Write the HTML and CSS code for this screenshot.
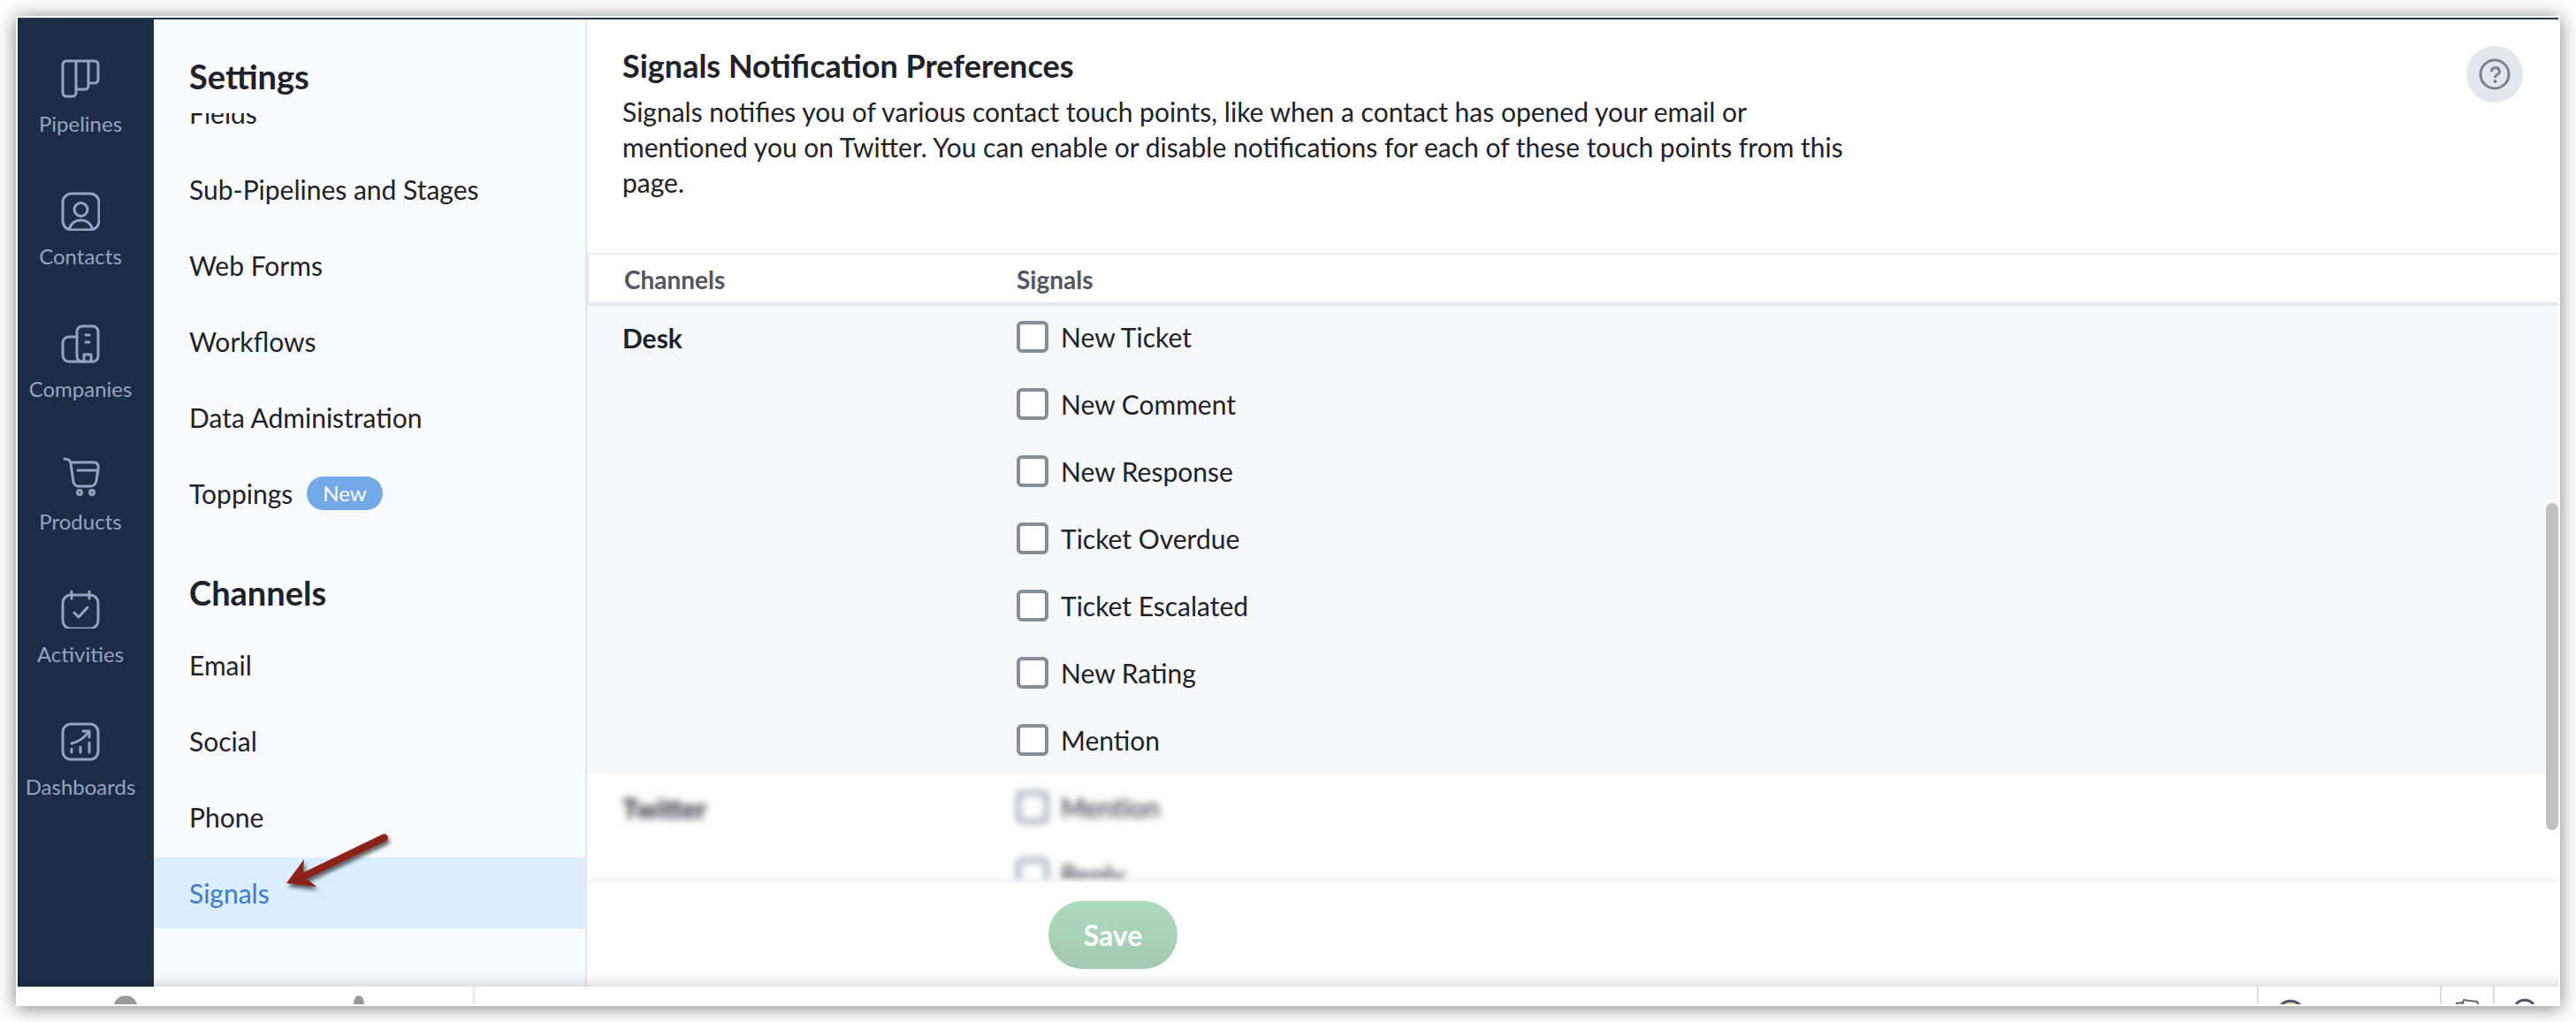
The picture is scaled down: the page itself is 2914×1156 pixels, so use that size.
FILE: index.html
```html
<!DOCTYPE html>
<html lang="en">
<head>
<meta charset="utf-8">
<title>Signals Notification Preferences</title>
<link rel="stylesheet" href="styles.css">
</head>
<body>
<div class="window">
  <div class="app">
    <nav class="rail" aria-label="Modules">
      <a class="rail-item" href="#">
        <svg class="rail-icon" viewBox="0 0 44 44"><path d="M6 2h11v36a4 4 0 0 1-4 4H6a4 4 0 0 1-4-4V6a4 4 0 0 1 4-4zM17 2h14v28a4 4 0 0 1-4 4H17M31 2h7a4 4 0 0 1 4 4v17a4 4 0 0 1-4 4h-7"/></svg>
        <span>Pipelines</span>
      </a>
      <a class="rail-item" href="#">
        <svg class="rail-icon" viewBox="0 0 44 44"><rect x="2" y="2" width="41" height="41" rx="10"/><circle cx="22.500" cy="20" r="7.500"/><path d="M10 41c3-12 22-12 25 0"/></svg>
        <span>Contacts</span>
      </a>
      <a class="rail-item" href="#">
        <svg class="rail-icon" viewBox="0 0 44 44"><rect x="18" y="2" width="24" height="40" rx="6"/><path d="M18 14H9a7 7 0 0 0-7 7v14a7 7 0 0 0 7 7h16M28 12h4M28 20h4M26 42v-8h8v8"/></svg>
        <span>Companies</span>
      </a>
      <a class="rail-item" href="#">
        <svg class="rail-icon" viewBox="0 0 44 44"><path d="M4 2c4 0 6 1 7 5l3 21c1 4 3 5 6 5h13c4 0 6-2 7-6l2-13c1-5-1-8-5-8H11M19 15h22"/><circle cx="21" cy="40" r="2.500"/><circle cx="35" cy="40" r="2.500"/></svg>
        <span>Products</span>
      </a>
      <a class="rail-item" href="#">
        <svg class="rail-icon" viewBox="0 0 44 44"><rect x="2" y="6" width="40" height="38" rx="9"/><path d="M12 2v8M32 2v8M15 26l5 5 10-11"/></svg>
        <span>Activities</span>
      </a>
      <a class="rail-item" href="#">
        <svg class="rail-icon" viewBox="0 0 44 44"><rect x="2" y="2" width="40" height="40" rx="9"/><path d="M12 30v4M22 28v6M32 23v11M12 24c8-2 14-6 19-13M25 10h7v7"/></svg>
        <span>Dashboards</span>
      </a>
    </nav>

    <aside class="sidebar">
      <h2 class="side-heading side-heading-top">Settings</h2>
      <div class="side-scroll">
        <ul class="side-list side-list-scrolled">
          <li><a href="#">Fields</a></li>
          <li><a href="#">Sub-Pipelines and Stages</a></li>
          <li><a href="#">Web Forms</a></li>
          <li><a href="#">Workflows</a></li>
          <li><a href="#">Data Administration</a></li>
          <li><a href="#">Toppings <span class="badge">New</span></a></li>
        </ul>
        <h2 class="side-heading side-heading-group">Channels</h2>
        <ul class="side-list">
          <li><a href="#">Email</a></li>
          <li><a href="#">Social</a></li>
          <li><a href="#">Phone</a></li>
          <li><a class="current" href="#" aria-current="page">Signals
            <svg class="pointer" viewBox="0 0 126 70"><path d="M4 59L24 32l-1 15L112 4a4 4 0 0 1 5 7L27 54l11 9z"/></svg></a></li>
        </ul>
      </div>
    </aside>

    <main class="main">
      <header class="intro">
        <div>
          <h1>Signals Notification Preferences</h1>
          <p>Signals notifies you of various contact touch points, like when a contact has opened your email or mentioned you on Twitter. You can enable or disable notifications for each of these touch points from this page.</p>
        </div>
        <button class="help" type="button" aria-label="Help">
          <svg viewBox="0 0 36 36"><circle cx="18" cy="18" r="16"/><path d="M14.500 15a4.500 4 0 1 1 7 3c-2 1-3 2-3 4"/><circle class="dot" cx="18.500" cy="26" r="2"/></svg>
        </button>
      </header>

      <div class="columns">
        <span>Channels</span>
        <span>Signals</span>
      </div>

      <div class="groups">
        <section class="group group-shaded">
          <h3>Desk</h3>
          <div class="checks">
            <label><input type="checkbox">New Ticket</label>
            <label><input type="checkbox">New Comment</label>
            <label><input type="checkbox">New Response</label>
            <label><input type="checkbox">Ticket Overdue</label>
            <label><input type="checkbox">Ticket Escalated</label>
            <label><input type="checkbox">New Rating</label>
            <label><input type="checkbox">Mention</label>
          </div>
        </section>
        <section class="group group-blurred">
          <h3>Twitter</h3>
          <div class="checks">
            <label><input type="checkbox">Mention</label>
            <label><input type="checkbox">Reply</label>
          </div>
        </section>
        <div class="fade"></div>
      </div>

      <footer class="actions">
        <button class="save" type="button">Save</button>
      </footer>
      <div class="scrollbar"></div>
    </main>
  </div>

  <div class="dock">
    <div class="dock-tabs">
      <svg viewBox="0 0 28 10"><path d="M1 10C4-3 24-3 27 10z"/></svg>
      <svg viewBox="0 0 28 10"><path d="M8 10C8-3 20-3 20 10z"/></svg>
    </div>
    <div class="dock-space"></div>
    <div class="dock-cell dock-wide"><svg viewBox="0 0 32 14"><path class="tan" d="M5 15a15 15 0 0 1 22 0"/></svg></div>
    <div class="dock-cell dock-note"><svg viewBox="0 0 32 14"><path class="note" d="M2 13l8-1v2M10 12l1-3 15 2 2 4"/></svg></div>
    <div class="dock-cell dock-last"><svg viewBox="0 0 32 14"><path class="ring" d="M6 14a13 13 0 0 1 20 0"/></svg></div>
  </div>
</div>
</body>
</html>
```
FILE: styles.css
```css
* { box-sizing: border-box; }

html, body { height: 100%; }

body {
  margin: 0;
  padding: 18px;
  background: #fff;
  color: #212129;
  font: 30px/40px Lato, Carlito, "Open Sans", sans-serif;
}

h1, h2, h3, p, ul { margin: 0; padding: 0; }
ul { list-style: none; }
a { color: inherit; text-decoration: none; }
button { border: 0; font: inherit; }

.window {
  display: flex;
  flex-direction: column;
  height: 100%;
  padding: 2px;
  background: #fff;
  box-shadow: 0 2px 20px rgba(0, 0, 0, 0.5);
}

.app {
  position: relative;
  display: flex;
  flex: 1;
  min-height: 0;
  border-top: 2px solid #26374f;
}
.app::after {
  content: "";
  position: absolute;
  inset: auto 0 0;
  height: 14px;
  background: linear-gradient(rgba(0, 0, 0, 0), rgba(0, 0, 0, 0.11));
}

/* Module rail */
.rail {
  display: flex;
  flex-direction: column;
  gap: 62px;
  flex: 0 0 154px;
  padding: 45px 12px 0 0;
  background: #1d2c45;
  color: #93a4c2;
}
.rail-item {
  display: flex;
  flex-direction: column;
  align-items: center;
  gap: 14px;
  font-size: 24px;
  line-height: 30px;
}
.rail-icon {
  width: 44px;
  height: 44px;
  fill: none;
  stroke: currentColor;
  stroke-width: 3;
  stroke-linecap: round;
  stroke-linejoin: round;
}

/* Settings sidebar */
.sidebar {
  display: flex;
  flex-direction: column;
  flex: 0 0 490px;
  border-right: 2px solid #e2e8ec;
  background: #fafbfd;
}
.side-heading {
  padding: 0 40px;
  font-size: 38px;
  line-height: 44px;
}
.side-heading-top { padding-top: 42px; padding-bottom: 20px; }
.side-heading-group { padding-top: 50px; padding-bottom: 20px; }
.side-scroll { flex: 1; min-height: 0; overflow: hidden; }
.side-list { display: flex; flex-direction: column; gap: 6px; }
.side-list-scrolled { margin-top: -40px; }
.side-list a {
  display: flex;
  align-items: center;
  gap: 16px;
  height: 80px;
  padding: 0 40px;
}
.side-list .current {
  position: relative;
  background: #dceefd;
  color: #3a7bd5;
}
.badge {
  padding: 0 18px;
  border-radius: 19px;
  background: #73a9e8;
  color: #fff;
  font-size: 24px;
  line-height: 38px;
}
.pointer {
  position: absolute;
  left: 146px;
  top: -30px;
  width: 126px;
  height: 70px;
  overflow: visible;
  fill: #8c2117;
  filter: drop-shadow(2px 4px 2px rgba(0, 0, 0, 0.6));
}

/* Preferences */
.main {
  position: relative;
  display: flex;
  flex-direction: column;
  flex: 1;
  min-width: 0;
}
.intro {
  display: flex;
  justify-content: space-between;
  padding: 30px 40px 60px;
}
.intro h1 { font-size: 36px; line-height: 44px; }
.intro p { max-width: 1400px; padding-top: 10px; }
.help {
  display: flex;
  align-items: center;
  justify-content: center;
  width: 64px;
  height: 64px;
  padding: 0;
  border-radius: 50%;
  background: #e1e7eb;
}
.help svg {
  width: 36px;
  height: 36px;
  fill: none;
  stroke: #7c8293;
  stroke-width: 3;
}
.help .dot { fill: #7c8293; stroke: none; }

.columns, .group {
  display: grid;
  grid-template-columns: 446px 1fr;
}
.columns {
  grid-template-columns: 444px 1fr;
  padding: 8px 40px 6px;
  border-top: 2px solid #e9eef2;
  border-bottom: 4px solid #e4e9ed;
  border-left: 2px solid #e4e9ed;
  color: #55555e;
  font-size: 28px;
  font-weight: 700;
}

.groups { position: relative; flex: 1; min-height: 0; overflow: hidden; }
.group { padding: 17px 40px 18px; }
.group h3 { font-size: 30px; line-height: 38px; }
.group-shaded { background: #f7f8fa; border-bottom: 1px solid #eef0f3; }
.group-blurred { padding-top: 21px; }
.group-blurred > * { filter: blur(4px); }
.checks { display: flex; flex-direction: column; gap: 40px; }
.checks label {
  display: flex;
  align-items: center;
  gap: 14px;
  height: 36px;
}
.checks input {
  appearance: none;
  width: 36px;
  height: 36px;
  margin: 0;
  border: 4px solid #868e9a;
  border-radius: 6px;
  background: #fff;
}
.fade {
  position: absolute;
  inset: auto 0 0;
  height: 8px;
  background: linear-gradient(rgba(240, 240, 240, 0), #f1f3f5);
}

.actions { padding: 21px 40px 20px 522px; }
.save {
  display: block;
  width: 146px;
  height: 77px;
  border-radius: 39px;
  background: linear-gradient(#addbc0, #a3cab1);
  color: #fff;
  font-size: 32px;
  font-weight: 700;
}

.scrollbar {
  position: absolute;
  right: 0;
  top: 547px;
  width: 14px;
  height: 370px;
  border-radius: 7px;
  background: #c1c1c1;
}

/* Dock along the window's foot */
.dock { display: flex; flex: 0 0 20px; overflow: hidden; }
.dock svg { display: block; overflow: visible; }
.dock-tabs {
  display: flex;
  align-items: flex-end;
  gap: 236px;
  width: 518px;
  padding-left: 108px;
  border-right: 4px solid #eee;
}
.dock-tabs svg { width: 28px; height: 10px; fill: #999; }
.dock-space { flex: 1; }
.dock-cell { padding: 6px 0 0; border-left: 2px solid #ddd; }
.dock-cell svg { width: 32px; height: 14px; fill: none; stroke: #4d556b; stroke-width: 3; }
.dock-cell .tan { fill: #e8d4a0; }
.dock-cell .note { stroke: #666; stroke-width: 2; }
.dock-wide { width: 207px; padding-left: 20px; }
.dock-note { width: 60px; padding-left: 14px; }
.dock-last { width: 74px; padding-left: 18px; }
```
